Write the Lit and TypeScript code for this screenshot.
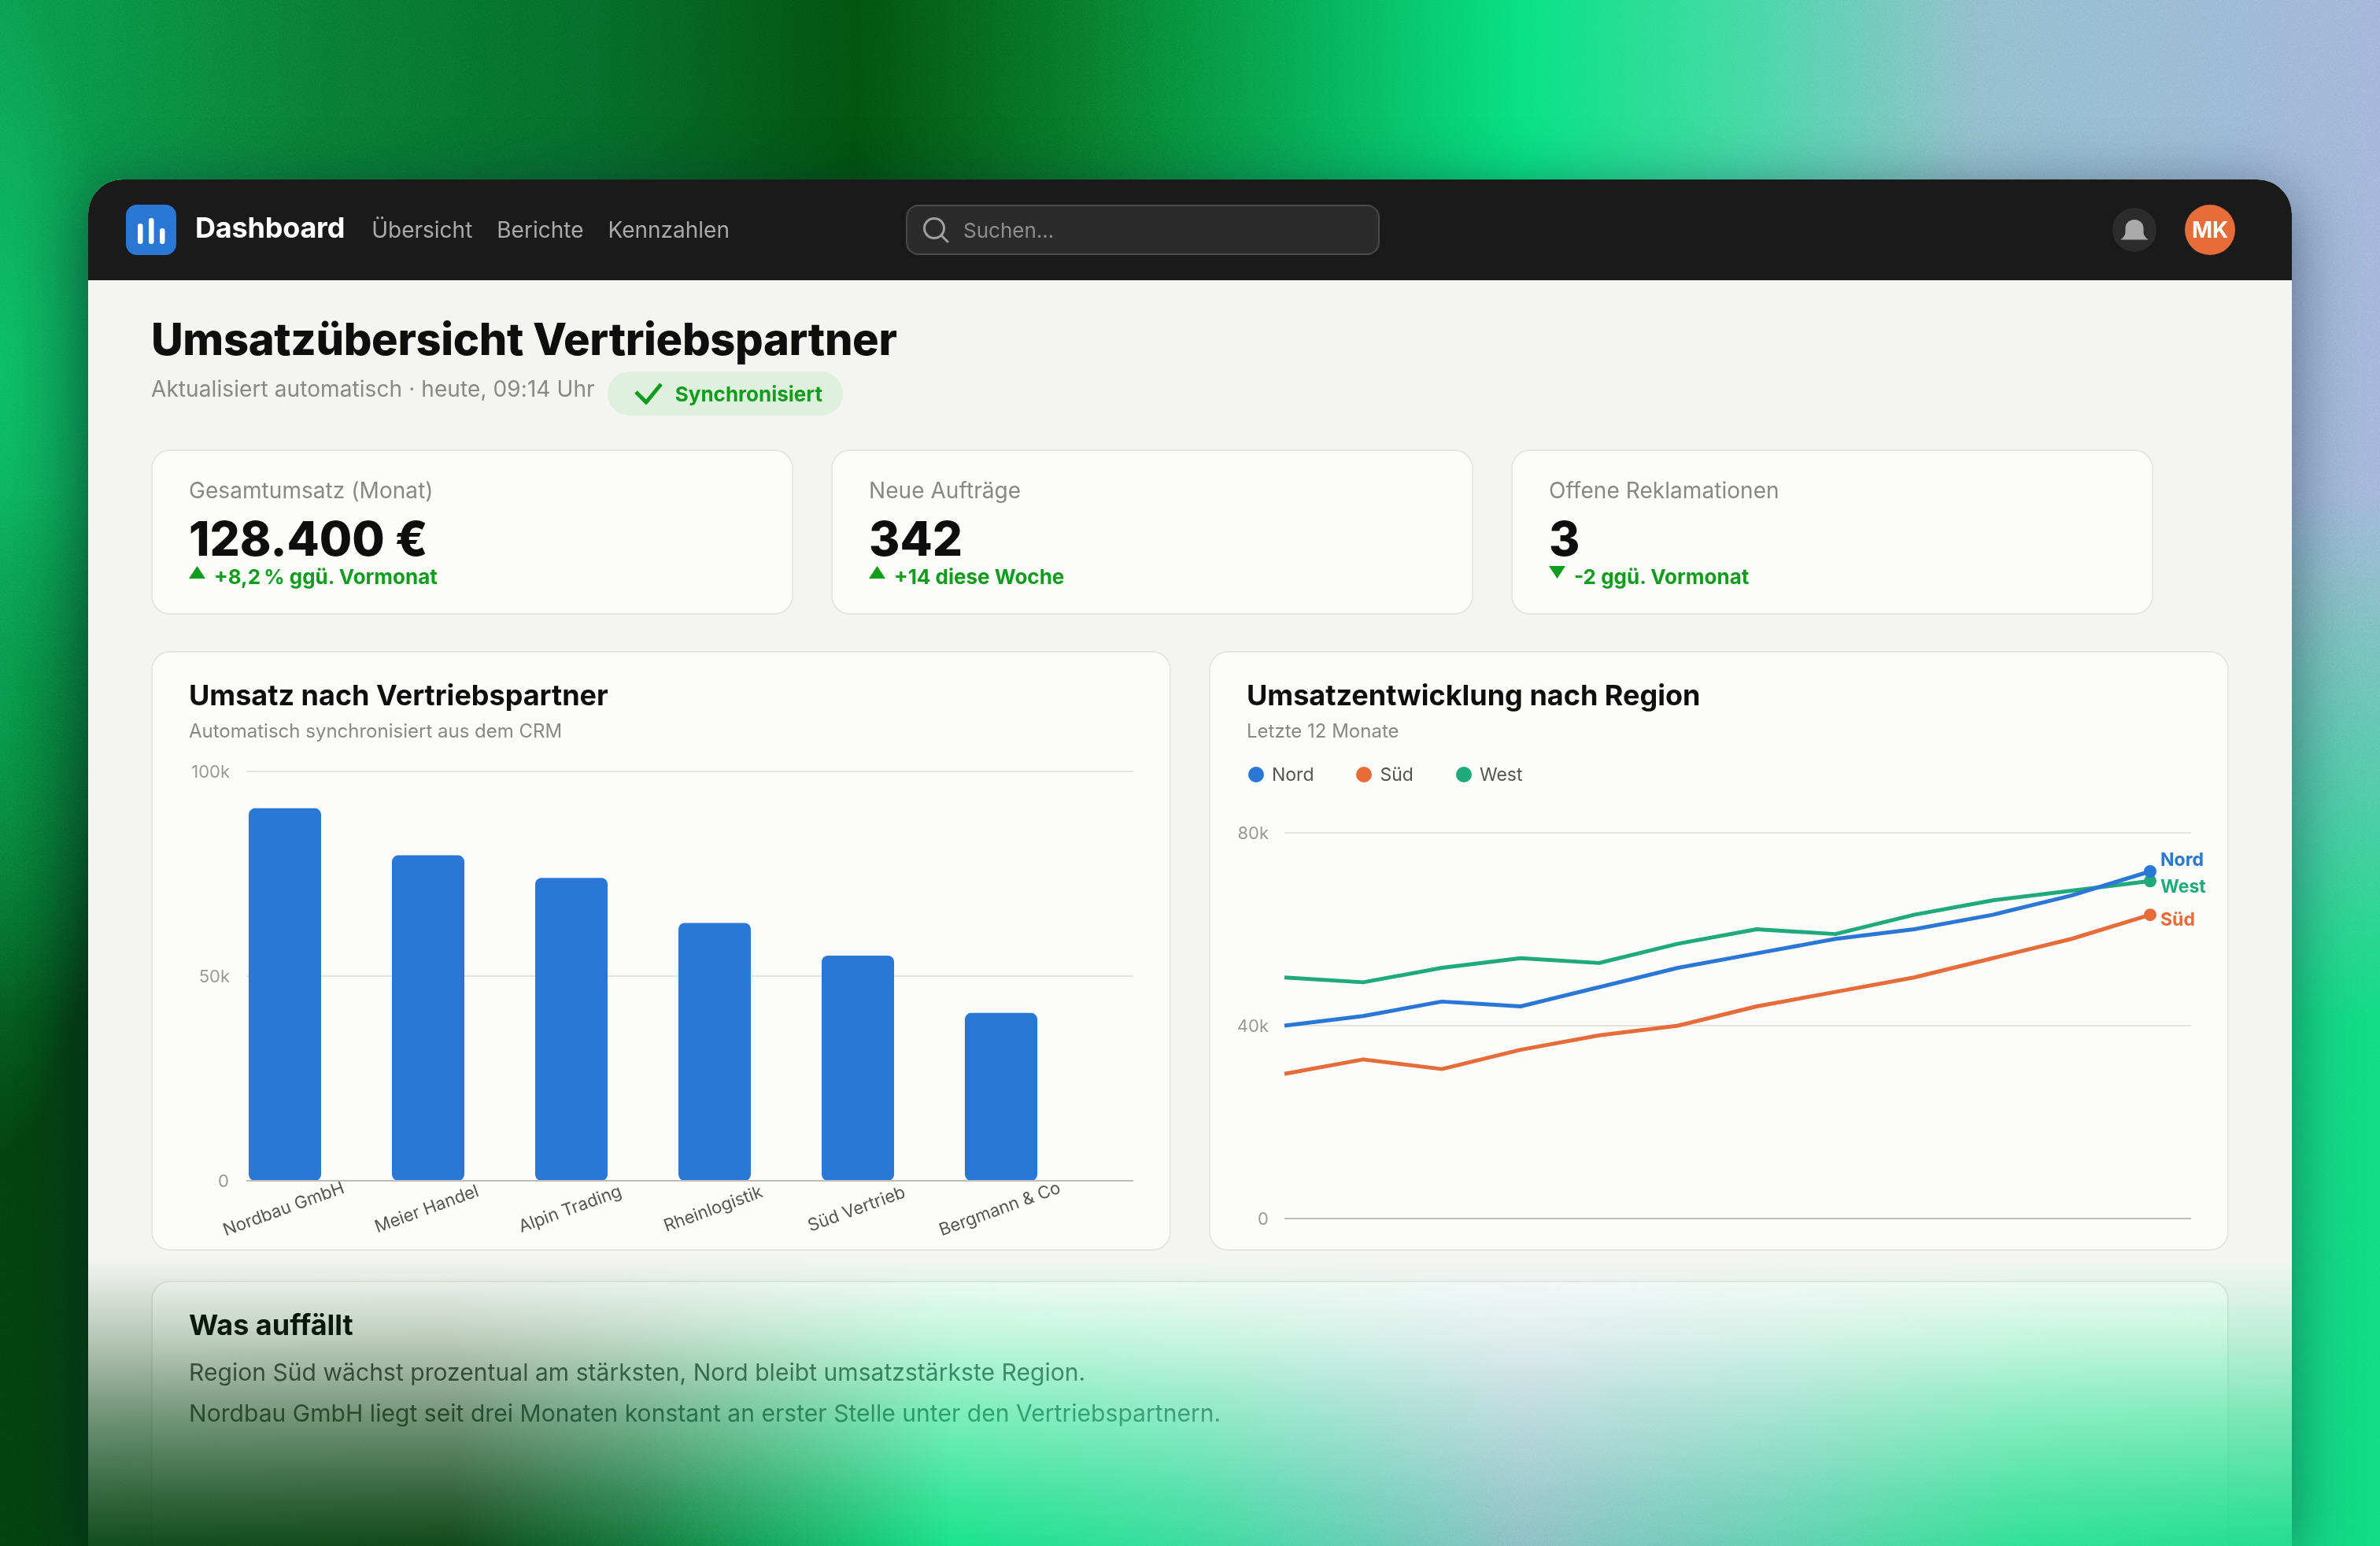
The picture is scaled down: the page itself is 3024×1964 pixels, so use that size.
import { LitElement, css, html, svg, unsafeCSS } from "lit";
import { customElement } from "lit/decorators.js";

const BLUE = "#2a77d5";
const ORANGE = "#e66c3a";
const TEAL = "#20a97a";
const GREEN = "#119c1d";

const stats = [
  { label: "Gesamtumsatz (Monat)", value: "128.400 €", delta: "+8,2\u202f% ggü. Vormonat", up: true },
  { label: "Neue Aufträge", value: "342", delta: "+14 diese Woche", up: true },
  { label: "Offene Reklamationen", value: "3", delta: "-2 ggü. Vormonat", up: false },
];

const partners = [
  { name: "Nordbau GmbH", value: 91 },
  { name: "Meier Handel", value: 79.5 },
  { name: "Alpin Trading", value: 74 },
  { name: "Rheinlogistik", value: 63 },
  { name: "Süd Vertrieb", value: 55 },
  { name: "Bergmann & Co", value: 41 },
];

const regions = [
  { name: "West", color: TEAL, labelY: 114, values: [50, 49, 52, 54, 53, 57, 60, 59, 63, 66, 68, 70] },
  { name: "Süd", color: ORANGE, labelY: 156, values: [30, 33, 31, 35, 38, 40, 44, 47, 50, 54, 58, 63] },
  { name: "Nord", color: BLUE, labelY: 80, values: [40, 42, 45, 44, 48, 52, 55, 58, 60, 63, 67, 72] },
];

const fade = unsafeCSS(`linear-gradient(
  to bottom,
  #000 0,
  #000 1372px,
  rgba(0, 0, 0, 0.75) 1472px,
  rgba(0, 0, 0, 0.45) 1572px,
  rgba(0, 0, 0, 0.2) 1672px,
  rgba(0, 0, 0, 0.06) 1736px
)`);

@customElement("app-root")
export class AppRoot extends LitElement {
  static styles = css`
    :host {
      display: block;
      width: 3024px;
      height: 1964px;
      overflow: hidden;
      position: relative;
      font-family: Inter, "Noto Sans", sans-serif;
      background:
        radial-gradient(ellipse 130px 560px at 0% 46%, #0a9e50cc 0%, transparent 100%),
        linear-gradient(
          90deg,
          #03400f 0%,
          #023a0a 19%,
          #056c30 27%,
          #0be07c 40%,
          #2cd894 50%,
          #80b9c0 64%,
          #55cca8 75%,
          #22dd8a 85%,
          #10da7c 100%
        );
    }
    /* upper half of the backdrop, fades into the host's lower colours */
    :host::before {
      content: "";
      position: absolute;
      inset: 0;
      background:
        radial-gradient(ellipse 140px 500px at 0% 24%, #0ec268cc 0%, transparent 100%),
        linear-gradient(
          90deg,
          #0a9a4c 0%,
          #0a8c42 6%,
          #097a34 13%,
          #06682a 25%,
          #024f10 36%,
          #08752a 45%,
          #07a550 54%,
          #08e07c 64%,
          #40d8a0 73%,
          #8ebccc 83%,
          #a0b4d8 100%
        );
      -webkit-mask-image: linear-gradient(to bottom, #000 32%, transparent 66%);
      mask-image: linear-gradient(to bottom, #000 32%, transparent 66%);
    }
    .grain {
      position: absolute;
      inset: 0;
      width: 100%;
      height: 100%;
      mix-blend-mode: overlay;
      opacity: 0.3;
      pointer-events: none;
    }
    .frame {
      position: relative;
      width: 2800px;
      margin: 228px 0 0 112px;
      border-radius: 44px 44px 0 0;
      box-shadow: 0 16px 80px rgba(10, 20, 50, 0.5);
    }
    .window {
      height: 1736px;
      border-radius: 44px 44px 0 0;
      overflow: hidden;
      background: #f4f4f2;
      -webkit-mask-image: ${fade};
      mask-image: ${fade};
    }
    .topbar {
      height: 128px;
      background: #1a1a1a;
      display: flex;
      align-items: center;
      padding: 0 72px 0 48px;
    }
    .logo {
      width: 64px;
      height: 64px;
      border-radius: 14px;
      background: ${unsafeCSS(BLUE)};
      flex: none;
    }
    .brand {
      margin-left: 24px;
      font-size: 36px;
      font-weight: 700;
      letter-spacing: -0.2px;
      color: #fff;
      position: relative;
      top: -3px;
    }
    .nav {
      display: flex;
      gap: 31px;
      margin-left: 34px;
      font-size: 28px;
      color: #aaa;
    }
    .search {
      margin-left: 224px;
      width: 602px;
      height: 64px;
      box-sizing: border-box;
      border: 2px solid #4a4a4a;
      border-radius: 16px;
      background: #2b2b2b;
      display: flex;
      align-items: center;
      gap: 17px;
      padding-left: 18px;
      font-size: 26px;
      color: #8e8e8e;
    }
    .actions {
      margin-left: auto;
      display: flex;
      align-items: center;
      gap: 36px;
    }
    .bell {
      width: 56px;
      height: 56px;
      border-radius: 50%;
      background: #2c2c2c;
      display: flex;
      align-items: center;
      justify-content: center;
    }
    .avatar {
      width: 64px;
      height: 64px;
      border-radius: 50%;
      background: ${unsafeCSS(ORANGE)};
      color: #fff;
      font-size: 28px;
      font-weight: 700;
      display: flex;
      align-items: center;
      justify-content: center;
    }
    .content {
      padding: 36px 80px 0;
    }
    h1 {
      margin: 0;
      font-size: 56px;
      line-height: 78px;
      font-weight: 800;
      letter-spacing: -0.35px;
      color: #0e0e0e;
    }
    .status {
      display: flex;
      align-items: flex-start;
      gap: 16px;
      margin-top: 2px;
    }
    .updated {
      font-size: 28px;
      line-height: 40px;
      letter-spacing: 0.09px;
      color: #888;
      margin-top: 2px;
    }
    .pill {
      height: 56px;
      box-sizing: border-box;
      padding: 0 26px 0 34px;
      border-radius: 28px;
      background: #dff0de;
      display: flex;
      align-items: center;
      gap: 16px;
      font-size: 26px;
      font-weight: 700;
      color: ${unsafeCSS(GREEN)};
    }
    .stats {
      display: flex;
      gap: 48px;
      margin-top: 43px;
    }
    .card {
      box-sizing: border-box;
      background: #fcfcfa;
      border: 2px solid #e6e6e2;
      border-radius: 24px;
    }
    .stat {
      width: 816px;
      height: 210px;
      padding: 30px 46px 0;
    }
    .stat-label {
      font-size: 28px;
      line-height: 40px;
      letter-spacing: 0.06px;
      color: #888;
    }
    .stat-value {
      font-size: 60px;
      line-height: 60px;
      font-weight: 800;
      color: #0e0e0e;
      margin: 11px 0 1px;
    }
    .delta {
      display: flex;
      gap: 11px;
      align-items: flex-start;
      font-size: 26px;
      line-height: 36px;
      font-weight: 700;
      color: ${unsafeCSS(GREEN)};
    }
    .delta svg {
      margin-top: 4px;
    }
    .charts {
      display: flex;
      gap: 48px;
      margin-top: 46px;
    }
    .chart {
      width: 1296px;
      height: 762px;
      padding: 30px 46px 0;
    }
    h2 {
      margin: 0;
      font-size: 36px;
      line-height: 48px;
      font-weight: 700;
      color: #0e0e0e;
    }
    .sub {
      margin-top: 6px;
      font-size: 24px;
      line-height: 32px;
      color: #888;
    }
    .chart svg {
      display: block;
      margin-top: 15px;
    }
    .legend {
      display: flex;
      gap: 54px;
      margin: 23px 0 0 2px;
      font-size: 23px;
      line-height: 32px;
      color: #555;
    }
    .legend span {
      display: flex;
      align-items: center;
      gap: 10px;
    }
    .legend i {
      width: 20px;
      height: 20px;
      border-radius: 50%;
    }
    .chart .legend + svg {
      margin: 20px -40px 0 -20px;
    }
    .tick {
      font-size: 22px;
      fill: #999;
    }
    .cat {
      font-size: 22px;
      fill: #555;
    }
    .end {
      font-size: 23px;
      font-weight: 700;
    }
    .note {
      margin-top: 38px;
      height: 420px;
      padding: 30px 46px 0;
    }
    .note p {
      margin: 0;
      font-size: 30px;
      line-height: 52px;
      letter-spacing: 0.05px;
      color: #555;
    }
    .note h2 {
      margin-bottom: 10px;
    }
  `;

  barChart() {
    const y0 = 540;
    const scale = 5.2;
    return html`<svg width="1200" height="620" viewBox="0 0 1200 620">
      <line x1="73" x2="1200" y1="20" y2="20" stroke="#e5e4de" stroke-width="2" />
      <line x1="73" x2="1200" y1="280" y2="280" stroke="#e5e4de" stroke-width="2" />
      ${partners.map((p, i) => {
        const x = 76 + i * 182;
        const h = p.value * scale;
        return svg`<rect x="${x}" y="${y0 - h}" width="92" height="${h}" rx="8" fill="${BLUE}" />
          <text class="cat" text-anchor="middle" x="${x + 44}" y="${y0 + 43}"
            transform="rotate(-20 ${x + 44} ${y0 + 35})">${p.name}</text>`;
      })}
      <line x1="73" x2="1200" y1="${y0}" y2="${y0}" stroke="#bdbdb5" stroke-width="2" />
      <text class="tick" text-anchor="end" x="52" y="28">100k</text>
      <text class="tick" text-anchor="end" x="52" y="288">50k</text>
      <text class="tick" text-anchor="end" x="51" y="548">0</text>
    </svg>`;
  }

  lineChart() {
    const left = 48;
    const y0 = 528;
    const py = (v: number) => y0 - v * 6.125;
    return html`<svg width="1260" height="540" viewBox="-20 0 1260 540">
      <line x1="${left}" x2="1200" y1="38" y2="38" stroke="#e5e4de" stroke-width="2" />
      <line x1="${left}" x2="1200" y1="283" y2="283" stroke="#e5e4de" stroke-width="2" />
      <line x1="${left}" x2="1200" y1="${y0}" y2="${y0}" stroke="#bdbdb5" stroke-width="2" />
      <text class="tick" text-anchor="end" x="28" y="46">80k</text>
      <text class="tick" text-anchor="end" x="28" y="291">40k</text>
      <text class="tick" text-anchor="end" x="28" y="536">0</text>
      ${regions.map((r) => {
        const pts = r.values.map((v, i) => `${left + i * 100},${py(v)}`).join(" ");
        const lastY = py(r.values[r.values.length - 1]);
        return svg`<polyline points="${pts}" fill="none" stroke="${r.color}" stroke-width="5" stroke-linejoin="round" />
          <circle cx="${left + 1100}" cy="${lastY}" r="8" fill="${r.color}" />
          <text class="end" x="${left + 1113}" y="${r.labelY}" fill="${r.color}">${r.name}</text>`;
      })}
    </svg>`;
  }

  render() {
    return html`
      <svg class="grain" aria-hidden="true">
        <filter id="noise">
          <feTurbulence type="fractalNoise" baseFrequency="0.55" numOctaves="2" seed="4" />
          <feColorMatrix type="saturate" values="0" />
        </filter>
        <rect width="100%" height="100%" filter="url(#noise)" />
      </svg>
      <div class="frame">
        <div class="window">
          <header class="topbar">
            <div class="logo">
              <svg width="64" height="64" viewBox="0 0 64 64" fill="#fff">
                <rect x="15" y="24" width="6.5" height="26" rx="3.2" />
                <rect x="29" y="17" width="6.5" height="33" rx="3.2" />
                <rect x="43" y="30" width="6.5" height="20" rx="3.2" />
              </svg>
            </div>
            <div class="brand">Dashboard</div>
            <nav class="nav"><span>Übersicht</span><span>Berichte</span><span>Kennzahlen</span></nav>
            <div class="search">
              <svg width="36" height="36" viewBox="0 0 36 36" fill="none" stroke="#a0a0a0" stroke-width="3" stroke-linecap="round">
                <circle cx="16" cy="16" r="12.5" />
                <line x1="25" y1="25" x2="33" y2="33" />
              </svg>
              Suchen...
            </div>
            <div class="actions">
              <div class="bell">
                <svg width="36" height="28" viewBox="0 0 36 28" fill="#aaa">
                  <path d="M18 1C11 1 6.5 6 6.5 12V17C6.5 21 3.5 24 0.5 26.5H35.5C32.5 24 29.5 21 29.5 17V12C29.5 6 25 1 18 1Z" />
                </svg>
              </div>
              <div class="avatar">MK</div>
            </div>
          </header>
          <main class="content">
            <h1>Umsatzübersicht Vertriebspartner</h1>
            <div class="status">
              <span class="updated">Aktualisiert automatisch · heute, 09:14 Uhr</span>
              <span class="pill">
                <svg width="36" height="28" viewBox="0 0 36 28" fill="none" stroke="${GREEN}" stroke-width="5">
                  <path d="M2 12L15 25L34 2" />
                </svg>
                Synchronisiert
              </span>
            </div>
            <section class="stats">
              ${stats.map(
                (s) => html`
                  <div class="card stat">
                    <div class="stat-label">${s.label}</div>
                    <div class="stat-value">${s.value}</div>
                    <div class="delta">
                      <svg width="21" height="16" viewBox="0 0 21 16" fill="${GREEN}">
                        <path d="${s.up ? "M10.5 0L21 16H0Z" : "M0 0H21L10.5 16Z"}" />
                      </svg>
                      ${s.delta}
                    </div>
                  </div>
                `
              )}
            </section>
            <section class="charts">
              <div class="card chart">
                <h2>Umsatz nach Vertriebspartner</h2>
                <div class="sub">Automatisch synchronisiert aus dem CRM</div>
                ${this.barChart()}
              </div>
              <div class="card chart">
                <h2>Umsatzentwicklung nach Region</h2>
                <div class="sub">Letzte 12 Monate</div>
                <div class="legend">
                  <span><i style="background:${BLUE}"></i>Nord</span>
                  <span><i style="background:${ORANGE}"></i>Süd</span>
                  <span><i style="background:${TEAL}"></i>West</span>
                </div>
                ${this.lineChart()}
              </div>
            </section>
            <section class="card note">
              <h2>Was auffällt</h2>
              <p>Region Süd wächst prozentual am stärksten, Nord bleibt umsatzstärkste Region.</p>
              <p>Nordbau GmbH liegt seit drei Monaten konstant an erster Stelle unter den Vertriebspartnern.</p>
            </section>
          </main>
        </div>
      </div>
    `;
  }
}

declare global {
  interface HTMLElementTagNameMap {
    "app-root": AppRoot;
  }
}
